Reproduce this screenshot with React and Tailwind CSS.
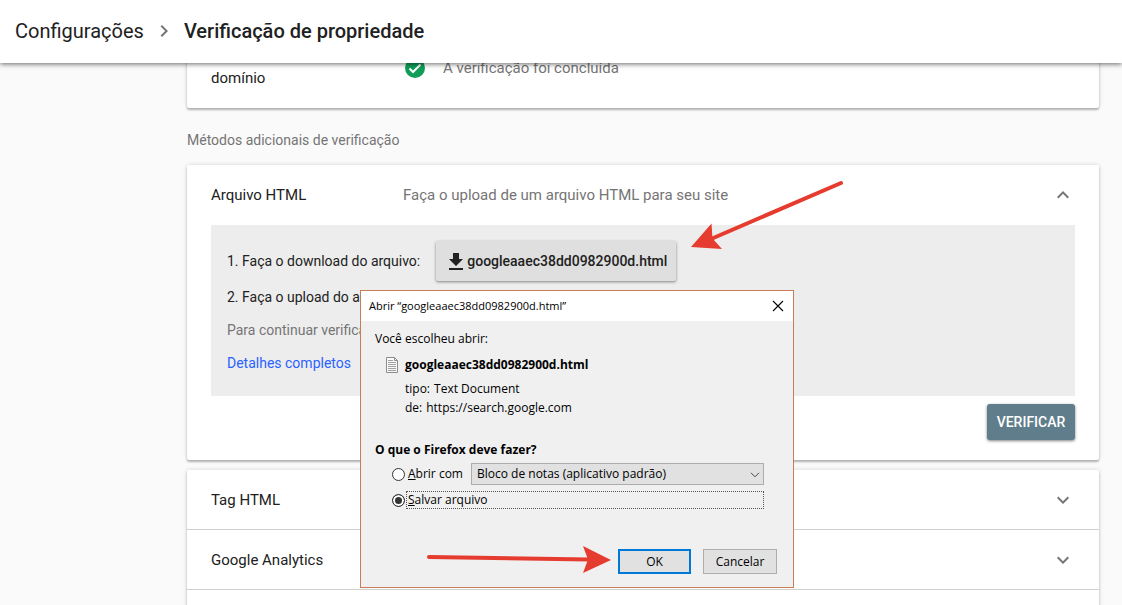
import { useState } from 'react';

const METHODS = ['Tag HTML', 'Google Analytics'];

const Chevron = ({ d, className }) => (
  <svg viewBox="0 0 24 24" className={`size-6 shrink-0 ${className}`} fill="#757575" aria-hidden="true">
    <path d={d} />
  </svg>
);

const UP = 'M12 8l-6 6 1.41 1.41L12 10.83l4.59 4.58L18 14z';
const DOWN = 'M16.59 8.59L12 13.17 7.41 8.59 6 10l6 6 6-6z';
const RIGHT = 'M10 6L8.59 7.41 13.17 12l-4.58 4.59L10 18l6-6z';

const CARD = 'bg-white shadow-[0_2px_2px_rgba(0,0,0,0.24),0_0_4px_rgba(0,0,0,0.16)]';
const RADIO =
  'size-[13px] shrink-0 appearance-none rounded-full border border-[#333333] bg-white checked:bg-[#333333] checked:shadow-[inset_0_0_0_2px_#ffffff]';

function OpenFileDialog() {
  const [action, setAction] = useState('save');

  return (
    <div
      role="dialog"
      aria-labelledby="dialog-title"
      className="absolute left-[360px] top-[290px] z-20 w-[434px] border border-[#c87d55] bg-[#f0f0f0] font-['Open_Sans','Noto_Sans',sans-serif] text-[12px] leading-4 text-black"
    >
      <div className="flex h-[30px] items-center justify-between bg-white pl-2 pr-[9px]">
        <h2 id="dialog-title" className="text-[11px]">Abrir “googleaaec38dd0982900d.html”</h2>
        <button aria-label="Fechar" className="size-3">
          <svg viewBox="0 0 12 12" className="size-3" stroke="#000000" strokeWidth="1.1">
            <path d="M1 1l10 10M11 1L1 11" />
          </svg>
        </button>
      </div>

      <div className="px-[14px] pb-[13px] pt-[10px]">
        <p>Você escolheu abrir:</p>
        <div className="mt-[10px] flex items-center gap-[6px] pl-[10px]">
          <svg viewBox="0 0 14 16" className="h-4 w-[14px]" fill="none" aria-hidden="true">
            <path d="M1.5.5h8l3 3v12h-11z" fill="#fafafa" stroke="#8c8c8c" />
            <path d="M9.5.5v3h3" stroke="#8c8c8c" />
            <path d="M3 3.5h5M3 5.5h8M3 7.5h8M3 9.5h8M3 11.5h8M3 13.5h8" stroke="#a0a0a0" />
          </svg>
          <strong className="font-bold">googleaaec38dd0982900d.html</strong>
        </div>
        <p className="mt-2 flex gap-1 pl-[30px]">
          <span>tipo:</span>
          <span>Text Document</span>
        </p>
        <p className="mt-[3px] flex gap-1 pl-[30px]">
          <span>de:</span>
          <span>https://search.google.com</span>
        </p>

        <h3 className="mt-[26px] font-bold">O que o Firefox deve fazer?</h3>
        <div className="mt-[5px] flex h-[22px] items-center pl-[17px] pr-[15px]">
          <input
            id="open-with"
            type="radio"
            name="action"
            className={RADIO}
            checked={action === 'open'}
            onChange={() => setAction('open')}
          />
          <label htmlFor="open-with" className="w-[66px] pl-[3px]">
            <u>A</u>brir com
          </label>
          <div className="relative flex-1">
            <select
              aria-label="Aplicativo"
              className="h-[22px] w-full appearance-none border border-[#adadad] bg-[#e1e1e1] pl-[5px]"
            >
              <option>Bloco de notas (aplicativo padrão)</option>
            </select>
            <svg viewBox="0 0 10 6" className="pointer-events-none absolute right-1 top-[9px] h-[6px] w-[10px]" fill="none" stroke="#444444">
              <path d="M1 .8l4 4 4-4" />
            </svg>
          </div>
        </div>
        <div className="mt-[5px] flex h-5 items-center pl-[17px] pr-[15px]">
          <input
            id="save-file"
            type="radio"
            name="action"
            className={RADIO}
            checked={action === 'save'}
            onChange={() => setAction('save')}
          />
          <label htmlFor="save-file" className="ml-px flex-1 border border-dotted border-[#555555] pl-px">
            <u>S</u>alvar arquivo
          </label>
        </div>

        <div className="mt-[39px] flex justify-end gap-3 pr-[2px]">
          <button className="h-[25px] w-[73px] border-2 border-[#0078d7] bg-[#e1e1e1]">OK</button>
          <button className="h-[25px] w-[74px] border border-[#adadad] bg-[#e1e1e1]">Cancelar</button>
        </div>
      </div>
    </div>
  );
}

function Arrows() {
  return (
    <svg className="pointer-events-none absolute left-0 top-0 z-30 h-[605px] w-[1122px]" fill="#e63c2f" aria-hidden="true">
      <path d="M841 183L711 239" stroke="#e63c2f" strokeWidth="4" strokeLinecap="round" />
      <path d="M691 247l20.500-23.500 1 15L722 249z" />
      <path d="M429 557l160 2.500" stroke="#e63c2f" strokeWidth="4" strokeLinecap="round" />
      <path d="M611 560l-28-14 5 13.500-5 13.500z" />
    </svg>
  );
}

export default function App() {
  return (
    <div className="relative flex h-screen flex-col overflow-hidden bg-[#fafafa] font-[Roboto,sans-serif] text-[15px] leading-5 text-[#212121]">
      <header className="z-10 flex h-[63px] shrink-0 items-center bg-white px-[15px] pb-[2px] text-[20px] shadow-[0_1px_5px_rgba(0,0,0,0.6)]">
        <a href="#configuracoes">Configurações</a>
        <Chevron d={RIGHT} className="mx-2" />
        <h1 className="font-medium">Verificação de propriedade</h1>
      </header>

      <main className="min-h-0 flex-1 pl-[187px] pr-[23px]">
        <section className={`-mt-4 flex items-start rounded-[2px] px-6 pb-5 pt-[11px] ${CARD}`}>
          <p className="w-[192px] pt-[10px]">domínio</p>
          <svg viewBox="0 0 20 20" className="mx-[2px] size-5" aria-hidden="true">
            <circle cx="10" cy="10" r="10" fill="#0f9d58" />
            <path d="M4.500 10.500l3.500 3.500 7.500-7.500" fill="none" stroke="#ffffff" strokeWidth="2" />
          </svg>
          <p className="ml-4 text-[#757575]">A verificação foi concluída</p>
        </section>

        <h2 className="mb-[15px] mt-[22px] text-[14px] text-[#757575]">Métodos adicionais de verificação</h2>

        <section className={`rounded-[2px] px-6 pb-5 ${CARD}`}>
          <div className="flex h-[60px] items-center">
            <h3 className="w-[192px]">Arquivo HTML</h3>
            <p className="flex-1 text-[#757575]">Faça o upload de um arquivo HTML para seu site</p>
            <button aria-label="Recolher">
              <Chevron d={UP} className="" />
            </button>
          </div>
          <div className="bg-[#ededed] px-4 pb-[23px] pt-4 text-[14px]">
            <div className="flex items-center gap-4">
              <p>1. Faça o download do arquivo:</p>
              <button className="flex h-10 items-center gap-1 rounded-[2px] bg-[#dfdfdf] pl-[13px] pr-[9px] font-medium shadow-[0_1px_3px_rgba(0,0,0,0.45)]">
                <svg viewBox="0 0 14 17" className="h-[17px] w-[14px] shrink-0" fill="#212121" aria-hidden="true">
                  <path d="M14 6h-4V0H4v6H0l7 7zM0 15v2h14v-2z" />
                </svg>
                googleaaec38dd0982900d.html
              </button>
            </div>
            <p className="mt-[6px]">2. Faça o upload do arquivo</p>
            <p className="mt-[13px] text-[#757575]">Para continuar verificado</p>
            <a href="#detalhes" className="mt-[13px] block text-[#2962ff]">
              Detalhes completos
            </a>
          </div>
          <div className="mt-2 flex justify-end">
            <button className="h-9 w-[88px] rounded-[3px] bg-[#607d8b] text-[14px] font-medium text-white shadow-[0_1px_3px_rgba(0,0,0,0.5)]">
              VERIFICAR
            </button>
          </div>
        </section>

        {/* Collapsed methods */}
        <ul className={`mt-[10px] rounded-t-[2px] ${CARD}`}>
          {METHODS.map((name) => (
            <li key={name} className="flex h-[60px] items-center justify-between border-b border-[#d0d0d0] px-6">
              <h3>{name}</h3>
              <button aria-label={`Expandir ${name}`}>
                <Chevron d={DOWN} className="" />
              </button>
            </li>
          ))}
          <li className="h-[60px]" />
        </ul>
      </main>

      <OpenFileDialog />
      <Arrows />
    </div>
  );
}
